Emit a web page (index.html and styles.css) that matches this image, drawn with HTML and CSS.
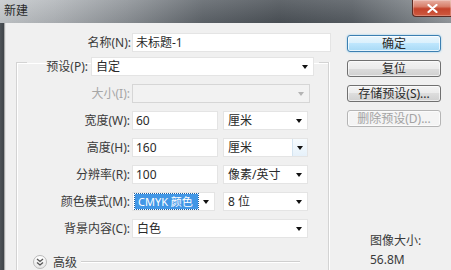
FILE: index.html
```html
<!DOCTYPE html>
<html lang="zh">
<head>
<meta charset="utf-8">
<title>新建</title>
<link rel="stylesheet" href="styles.css">
</head>
<body>
<div class="titlebar">
  <span class="title">新建</span>
  <div class="close">
    <svg width="11" height="9" viewBox="0 0 11 9"><path d="M1.5 1 L9.5 8 M9.5 1 L1.5 8" stroke="#fff" stroke-width="2.2" stroke-linecap="round"/></svg>
  </div>
</div>
<div class="window">
  <div class="frame"></div>
  <div class="client">
    <div class="main">
      <div class="name-row">
        <span class="lbl name-lbl">名称(N):</span>
        <div class="field name-field">未标题-1</div>
      </div>
      <fieldset class="group">
        <legend>
          <div class="legend-row">
            <span class="lbl preset-lbl">预设(P):</span>
            <div class="select preset">自定<i class="arrow"></i></div>
          </div>
        </legend>
        <div class="rows">
          <span class="lbl disabled-text">大小(I):</span>
          <div class="ctrl"><div class="select size disabled"><span></span><i class="arrow"></i></div></div>

          <span class="lbl">宽度(W):</span>
          <div class="ctrl"><div class="field num">60</div><div class="select unit">厘米<i class="arrow"></i></div></div>

          <span class="lbl">高度(H):</span>
          <div class="ctrl"><div class="field num">160</div><div class="select unit hover">厘米<i class="arrow-box"><i class="arrow"></i></i></div></div>

          <span class="lbl">分辨率(R):</span>
          <div class="ctrl"><div class="field num">100</div><div class="select unit">像素/英寸<i class="arrow"></i></div></div>

          <span class="lbl">颜色模式(M):</span>
          <div class="ctrl"><div class="select mode"><span class="hl">CMYK 颜色</span><i class="arrow"></i></div><div class="select unit">8 位<i class="arrow"></i></div></div>

          <span class="lbl">背景内容(C):</span>
          <div class="ctrl"><div class="select wide">白色<i class="arrow"></i></div></div>
        </div>
        <div class="advanced">
          <span class="adv-icon">
            <svg width="8" height="8" viewBox="0 0 8 8"><path d="M1 1 L4 3.5 L7 1 M1 4.5 L4 7 L7 4.5" fill="none" stroke="#555" stroke-width="1.3"/></svg>
          </span>
          <span class="adv-text">高级</span>
          <span class="adv-line"></span>
        </div>
      </fieldset>
    </div>
    <div class="side">
      <div class="buttons">
        <div class="btn primary">确定</div>
        <div class="btn">复位</div>
        <div class="btn">存储预设(S)...</div>
        <div class="btn disabled">删除预设(D)...</div>
      </div>
      <div class="info">
        <div>图像大小:</div>
        <div>56.8M</div>
      </div>
    </div>
  </div>
</div>
</body>
</html>
```
FILE: styles.css
```css
* { box-sizing: border-box; }

html, body { overflow: hidden; }

body {
  margin: 0;
  width: 451px;
  height: 270px;
  background: #f0f0f0;
  font-family: "Noto Sans", "Noto Sans CJK SC", sans-serif;
  font-size: 12px;
  line-height: 17px;
  color: #333;
}

.titlebar {
  height: 23px;
  display: flex;
  justify-content: space-between;
  align-items: flex-start;
  background:
    linear-gradient(to bottom, rgba(255,255,255,0.12), rgba(0,0,0,0.06)),
    linear-gradient(to right, #c6cacd 0%, #b2b6ba 12%, #8d9297 28%, #5f656b 45%, #4c5258 62%, #575d63 78%, #7d8388 92%, #969ba0 100%);
}

.title {
  padding: 3px 0 0 4px;
  line-height: 16px;
  color: #2a2a2a;
}

.close {
  width: 39px;
  height: 17px;
  display: flex;
  align-items: center;
  justify-content: center;
  border: 1px solid #5a2a22;
  border-top: none;
  border-right: none;
  border-radius: 0 0 0 4px;
  background: linear-gradient(to bottom, #e8b0a4 0%, #d8806c 40%, #c4432b 55%, #cf5a40 100%);
  box-shadow: inset 0 0 0 1px rgba(255,255,255,0.25);
}

.window {
  display: flex;
  height: 247px;
  overflow: hidden;
}

.frame {
  width: 6px;
  background: linear-gradient(to right, #4e5358 0%, #3f4449 66%, #a9a9a9 66%, #a9a9a9 83%, #e4e4e4 83%);
}

.client {
  flex: 1;
  display: flex;
}

.main {
  width: 326px;
  padding-top: 10px;
}

.lbl {
  text-align: right;
  white-space: nowrap;
  color: #3a3a3a;
}

.name-row {
  display: flex;
  align-items: center;
  gap: 1px;
  height: 19px;
}

.name-lbl { width: 125px; }

.field {
  height: 19px;
  background: #fff;
  border: 1px solid #e4e4e4;
  padding-left: 3px;
  line-height: 17px;
  color: #2a2a2a;
}

.name-field { width: 199px; }

.group {
  margin: -3px 3px 0 10px;
  padding: 0 10px;
  min-width: 0;
  height: 221px;
  border: 1px solid #d3d3d3;
  border-bottom: none;
  box-shadow: inset 1px 1px 0 #fff, 1px 0 0 #fff;
}

.group legend {
  padding: 8px 5px 0 1px;
}

.legend-row {
  display: flex;
  align-items: center;
  gap: 3px;
}

.preset-lbl { width: 60px; }

.select {
  height: 19px;
  display: flex;
  align-items: center;
  justify-content: space-between;
  background: #fff;
  border: 1px solid #e4e4e4;
  padding: 0 5px 0 4px;
  color: #2a2a2a;
  white-space: nowrap;
}

.arrow {
  display: block;
  width: 0;
  height: 0;
  border-top: 4px solid #111;
  border-left: 3.5px solid transparent;
  border-right: 3.5px solid transparent;
}

.preset { width: 223px; }

.rows {
  margin-top: 8px;
  display: grid;
  grid-template-columns: 103px auto;
  grid-auto-rows: 19px;
  column-gap: 2px;
  row-gap: 8px;
  align-items: center;
}

.ctrl {
  display: flex;
  gap: 5px;
}

.num { width: 86px; }
.unit { width: 85px; }
.wide { width: 176px; }

.size {
  width: 178px;
  background: #f2f2f2;
  border-color: #d6d6d6;
}
.size .arrow { border-top-color: #b4b4b4; }

.disabled-text { color: #a6a6a6; }

.hover { padding-right: 0; }
.arrow-box {
  display: flex;
  align-items: center;
  justify-content: center;
  width: 15px;
  height: 17px;
  background: linear-gradient(#f7fbfe, #e6f1fa);
  border-left: 1px solid #d4e4f1;
}

.mode {
  width: 83px;
  margin-right: 3px;
  padding-left: 2px;
}

.hl {
  display: block;
  width: 63px;
  height: 15px;
  line-height: 15px;
  padding-left: 3px;
  background: #4297e6;
  color: #fff;
  font-size: 11px;
  outline: 1px dotted #1f5f9f;
}

.advanced {
  display: flex;
  align-items: center;
  height: 14px;
  margin-top: 17px;
}

.adv-icon {
  width: 14px;
  height: 14px;
  margin-left: 6px;
  border: 1px solid #b9b9b9;
  border-radius: 50%;
  background: linear-gradient(#ffffff, #e6e6e6);
  display: flex;
  align-items: center;
  justify-content: center;
}

.adv-text {
  margin-left: 6px;
  color: #3a3a3a;
}

.adv-line {
  flex: 1;
  height: 2px;
  margin: 0 18px 0 4px;
  border-top: 1px solid #cfcfcf;
  border-bottom: 1px solid #fff;
}

.side {
  padding: 12px 0 0 15px;
}

.buttons {
  display: flex;
  flex-direction: column;
  gap: 8px;
}

.btn {
  width: 94px;
  height: 17px;
  display: flex;
  align-items: center;
  justify-content: center;
  border: 1px solid #707070;
  border-radius: 3px;
  background: linear-gradient(#f3f3f3 0%, #ebebeb 50%, #dddddd 50%, #d0d0d0 100%);
  box-shadow: inset 0 0 0 1px rgba(255,255,255,0.6);
  color: #2a2a2a;
  line-height: 15px;
  white-space: nowrap;
}

.btn.primary {
  border-color: #3c7fb1;
  background: linear-gradient(#eaf6fd 0%, #d9f0fc 50%, #bee6fd 50%, #a7d9f5 100%);
  box-shadow: inset 0 0 0 1px rgba(255,255,255,0.7), 0 0 2px #7fc4ec;
}

.btn.disabled {
  border-color: #b5b5b5;
  background: #f4f4f4;
  color: #a3a3a3;
}

.info {
  margin-top: 104px;
  padding-left: 23px;
  line-height: 19px;
  color: #3a3a3a;
}
```
